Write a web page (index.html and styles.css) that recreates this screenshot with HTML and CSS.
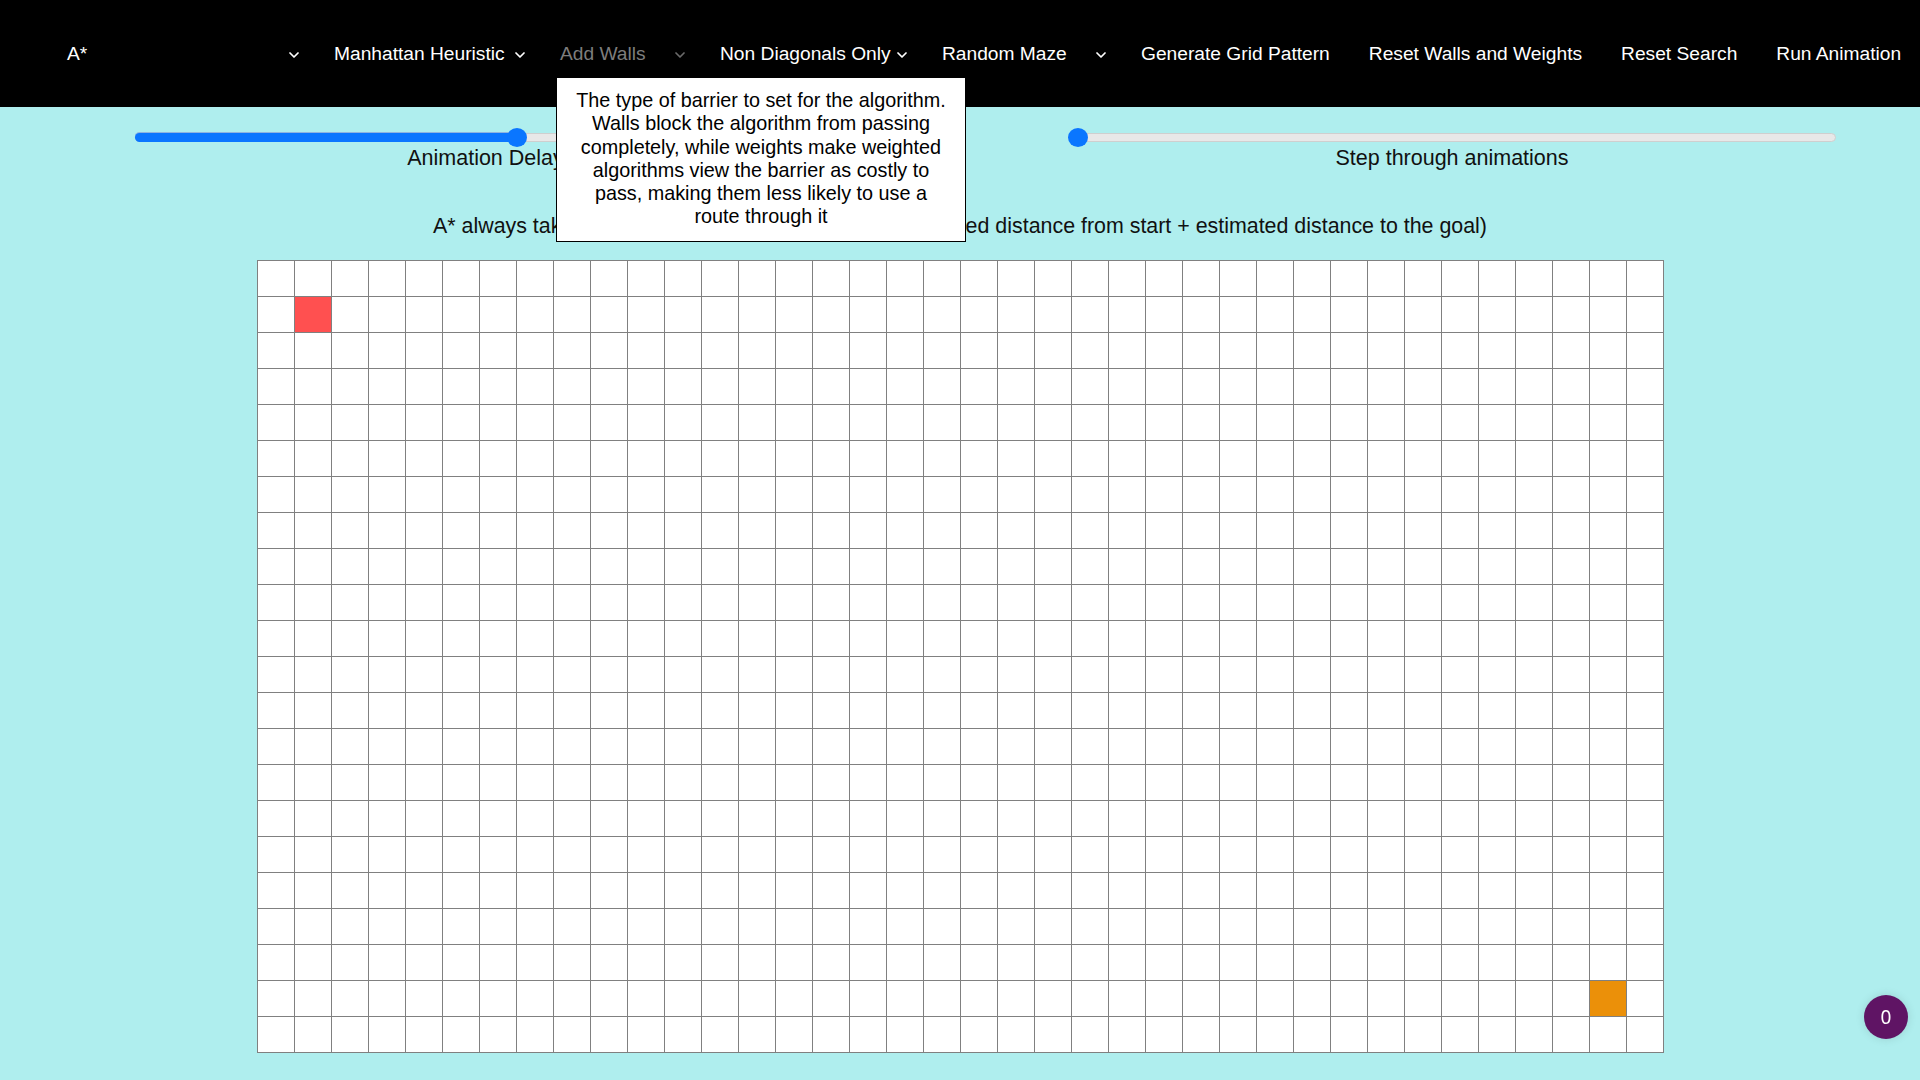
FILE: index.html
```html
<!DOCTYPE html>
<html lang="en">
<head>
<meta charset="utf-8">
<title>Pathfinding Visualizer</title>
<link rel="stylesheet" href="styles.css">
</head>
<body>
<nav class="topbar">
  <div class="dd dd-algo"><span>A*</span><svg class="chev" viewBox="0 0 10 6"><polyline points="1,1 5,5 9,1"/></svg></div>
  <div class="dd dd-heur"><span>Manhattan Heuristic</span><svg class="chev" viewBox="0 0 10 6"><polyline points="1,1 5,5 9,1"/></svg></div>
  <div class="dd dd-walls muted"><span>Add Walls</span><svg class="chev" viewBox="0 0 10 6"><polyline points="1,1 5,5 9,1"/></svg></div>
  <div class="dd dd-diag"><span>Non Diagonals Only</span><svg class="chev" viewBox="0 0 10 6"><polyline points="1,1 5,5 9,1"/></svg></div>
  <div class="dd dd-maze"><span>Random Maze</span><svg class="chev" viewBox="0 0 10 6"><polyline points="1,1 5,5 9,1"/></svg></div>
  <a class="link">Generate Grid Pattern</a>
  <a class="link spaced">Reset Walls and Weights</a>
  <a class="link spaced">Reset Search</a>
  <a class="link spaced">Run Animation</a>
</nav>

<div class="tooltip">The type of barrier to set for the algorithm. Walls block the algorithm from passing completely, while weights make weighted algorithms view the barrier as costly to pass, making them less likely to use a route through it</div>

<main class="main">
  <div class="controls">
    <div class="slider-block delay">
      <div class="slider">
        <div class="rail"></div>
        <div class="fill" style="width:382px"></div>
        <div class="thumb" style="left:372px"></div>
      </div>
      <div class="slider-label">Animation Delay</div>
    </div>
    <div class="slider-block steps">
      <div class="slider">
        <div class="rail"></div>
        <div class="thumb" style="left:0px"></div>
      </div>
      <div class="slider-label">Step through animations</div>
    </div>
  </div>

  <p class="desc">A* always takes the cell with the lowest total cost (travelled distance from start + estimated distance to the goal)</p>

  <div class="board">
    <div class="cell start"></div>
    <div class="cell goal"></div>
  </div>
</main>

<div class="badge">0</div>
</body>
</html>
```

FILE: styles.css
```css
html, body {
  margin: 0;
  padding: 0;
}

body {
  background: #afeeee;
  font-family: "Liberation Sans", Arial, sans-serif;
  color: #111;
  width: 1920px;
  height: 1080px;
  overflow: hidden;
  position: relative;
}

/* ---------- top bar ---------- */
.topbar {
  height: 107px;
  background: #000;
  display: flex;
  align-items: center;
  padding-left: 67px;
  gap: 35px;
  font-size: 19.2px;
  color: #fff;
  box-sizing: border-box;
}

.dd {
  display: flex;
  align-items: center;
  justify-content: space-between;
  white-space: nowrap;
}

.dd-algo { width: 232px; }
.dd-heur { width: 191px; }
.dd-walls { width: 125px; }
.dd-diag { width: 187px; }
.dd-maze { width: 164px; }

.chev {
  width: 10px;
  height: 6px;
  margin-top: 2px;
  fill: none;
  stroke: #fff;
  stroke-width: 1.7;
  stroke-linecap: round;
  stroke-linejoin: round;
}

.muted {
  color: #7d7d7d;
}

.muted .chev {
  stroke: #6a6a6a;
}

.link {
  white-space: nowrap;
  color: #fff;
}

.link.spaced {
  margin-left: 4px;
}

/* ---------- tooltip ---------- */
.tooltip {
  position: absolute;
  left: 556px;
  top: 77px;
  width: 410px;
  box-sizing: border-box;
  padding: 11px 14px 12px;
  background: #fff;
  border: 1px solid #000;
  font-size: 19.8px;
  line-height: 23.3px;
  text-align: center;
  color: #000;
  z-index: 5;
}

/* ---------- controls ---------- */
.main {
  padding-top: 23px;
}

.controls {
  display: flex;
  padding-left: 135px;
  gap: 232px;
}

.slider-block.delay { width: 701px; }
.slider-block.steps { width: 768px; }

.slider {
  position: relative;
  height: 16px;
}

.rail {
  position: absolute;
  left: 0;
  right: 0;
  top: 3px;
  height: 9px;
  box-sizing: border-box;
  border-radius: 5px;
  background: #e8e8e8;
  border: 1px solid #cfcfcf;
}

.fill {
  position: absolute;
  left: 0;
  top: 3px;
  height: 9px;
  border-radius: 5px 0 0 5px;
  background: #0a76ff;
  box-shadow: 0 -1px 0 #8fb4e0;
}

.thumb {
  position: absolute;
  top: -2px;
  width: 20px;
  height: 19px;
  border-radius: 50%;
  background: #0a76ff;
}

.slider-label {
  text-align: center;
  font-size: 21.5px;
  line-height: 24px;
}

.desc {
  margin: 43px 0 0;
  text-align: center;
  font-size: 21.4px;
  line-height: 26px;
}

/* ---------- board ---------- */
.board {
  margin: 21px auto 0;
  width: 1407px;
  height: 793px;
  box-sizing: border-box;
  padding: 1px 0 0 1px;
  background-color: #fff;
  background-image:
    linear-gradient(to right, #808080 1px, transparent 1px),
    linear-gradient(to bottom, #808080 1px, transparent 1px);
  background-size: 37px 36px;
  display: grid;
  grid-template-columns: repeat(38, 37px);
  grid-template-rows: repeat(22, 36px);
}

.cell {
  width: 36px;
  height: 35px;
}

.cell.start {
  grid-column: 2;
  grid-row: 2;
  background: #ff5050;
}

.cell.goal {
  grid-column: 37;
  grid-row: 21;
  background: #eb9009;
}

/* ---------- badge ---------- */
.badge {
  position: fixed;
  right: 12px;
  bottom: 41px;
  width: 44px;
  height: 44px;
  border-radius: 50%;
  background: #5f1464;
  color: #fff;
  font-family: "Noto Sans", "Open Sans", sans-serif;
  font-size: 19px;
  display: flex;
  align-items: center;
  justify-content: center;
  box-shadow: 0 0 10px rgba(0, 0, 0, 0.12);
}
```
